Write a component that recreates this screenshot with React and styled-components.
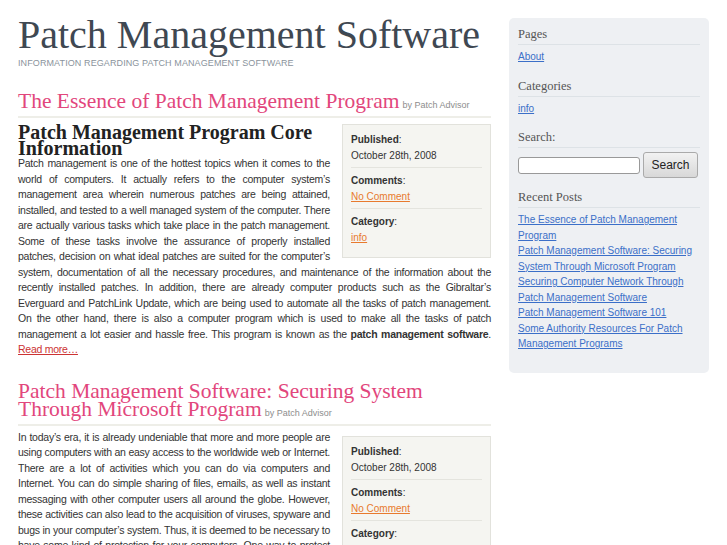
import React from "react";
import styled, { createGlobalStyle } from "styled-components";

const Global = createGlobalStyle`
  body { margin: 0; background: #fff; font-family: "Liberation Sans", Arial, sans-serif; }
`;

const Page = styled.div`
  display: flex;
  gap: 18px;
  padding: 0 18px;
  width: 727px;
  box-sizing: border-box;
  height: 545px;
  overflow: hidden;
`;

const Main = styled.main`
  width: 473px;
  flex-shrink: 0;
`;

const SiteTitle = styled.h1`
  font-family: "Liberation Serif", "Times New Roman", serif;
  font-weight: normal;
  font-size: 40px;
  color: #3f4852;
  margin: 12px 0 0;
  line-height: 46px;
  white-space: nowrap;
`;

const Tagline = styled.div`
  font-size: 9px;
  color: #8a939c;
  text-transform: uppercase;
  letter-spacing: 0.1px;
  margin-top: 0;
`;

const Post = styled.article`
  margin-top: ${(p) => p.$top}px;
`;

const PostHead = styled.div`
  border-bottom: 2px solid #eeeee8;
  padding-bottom: 4px;
  margin-bottom: 4px;
`;

const PostTitle = styled.h2`
  display: inline;
  font-family: "Liberation Serif", "Times New Roman", serif;
  font-weight: normal;
  font-size: 21.5px;
  line-height: 15px;
  color: #e2467c;
  margin: 0;
`;

const By = styled.span`
  font-size: 9px;
  color: #8d8d8d;
  margin-left: 3px;
  white-space: nowrap;
`;

const Meta = styled.aside`
  float: right;
  width: 149px;
  box-sizing: border-box;
  margin: ${(p) => p.$top}px 0 6px 12px;
  background: #f5f5f1;
  border: 1px solid #e2e2dc;
  padding: 5px 8px 8px;
  font-size: 10px;
  color: #333;
`;

const MetaItem = styled.div`
  line-height: 16px;
  padding: 2px 0 3px;
  & + & { border-top: 1px solid #e4e4de; padding-top: 5px; }
  a { color: #e87a2e; }
`;

const SubHead = styled.h3`
  font-family: "Liberation Serif", "Times New Roman", serif;
  font-weight: bold;
  font-size: 20px;
  line-height: 16px;
  margin: 0;
  color: #222;
  padding-top: 2px;
`;

const Body = styled.p`
  font-size: 10.5px;
  letter-spacing: -0.25px;
  line-height: 15.5px;
  color: #333;
  text-align: justify;
  margin: ${(p) => p.$top || 0}px 0 0;
  a { color: #c33; }
`;

const Side = styled.aside`
  width: 200px;
  margin-top: 18px;
  height: 355px;
  background: #eef0f3;
  border-radius: 5px;
  padding: 9px 9px;
  box-sizing: border-box;
`;

const WidgetTitle = styled.h4`
  font-family: "Liberation Serif", "Times New Roman", serif;
  font-weight: normal;
  font-size: 12.5px;
  color: #555;
  margin: ${(p) => p.$top}px 0 4px;
  padding-bottom: 2px;
  border-bottom: 1px solid #dde2e6;
`;

const SideLink = styled.a`
  display: block;
  font-size: 10px;
  line-height: 15.5px;
  color: #3b6fc8;
  text-decoration: underline;
`;

const SearchRow = styled.div`
  display: flex;
  align-items: center;
  gap: 3px;
`;

const Input = styled.input`
  width: 122px;
  height: 17px;
  border: 1px solid #999;
  border-radius: 3px;
  box-sizing: border-box;
`;

const Button = styled.button`
  height: 26px;
  width: 55px;
  font-family: "Liberation Sans", Arial, sans-serif;
  font-size: 12px;
  color: #222;
  border: 1px solid #aaa;
  border-radius: 3px;
  background: linear-gradient(#f2f2f2, #d8d8d8);
`;

const MetaBox = ({ top }) => (
  <Meta $top={top}>
    <MetaItem><b>Published</b>:<br />October 28th, 2008</MetaItem>
    <MetaItem><b>Comments</b>:<br /><a href="#">No Comment</a></MetaItem>
    <MetaItem><b>Category</b>:<br /><a href="#">info</a></MetaItem>
  </Meta>
);

export default function App() {
  return (
    <>
      <Global />
      <Page>
        <Main>
          <SiteTitle>Patch Management Software</SiteTitle>
          <Tagline>Information regarding Patch Management Software</Tagline>
          <Post $top={26}>
            <PostHead>
              <PostTitle>The Essence of Patch Management Program</PostTitle>
              <By>by Patch Advisor</By>
            </PostHead>
            <MetaBox top={2} />
            <SubHead>Patch Management Program Core Information</SubHead>
            <Body>
              Patch management is one of the hottest topics when it comes to the world of computers. It actually refers to the computer system’s management area wherein numerous patches are being attained, installed, and tested to a well managed system of the computer. There are actually various tasks which take place in the patch management. Some of these tasks involve the assurance of properly installed patches, decision on what ideal patches are suited for the computer’s system, documentation of all the necessary procedures, and maintenance of the information about the recently installed patches. In addition, there are already computer products such as the Gibraltar’s Everguard and PatchLink Update, which are being used to automate all the tasks of patch management. On the other hand, there is also a computer program which is used to make all the tasks of patch management a lot easier and hassle free. This program is known as the <b>patch management software</b>. <a href="#">Read more…</a>
            </Body>
          </Post>
          <Post $top={26}>
            <PostHead>
              <PostTitle>Patch Management Software: Securing System Through Microsoft Program</PostTitle>
              <By>by Patch Advisor</By>
            </PostHead>
            <MetaBox top={6} />
            <Body $top={4}>
              In today’s era, it is already undeniable that more and more people are using computers with an easy access to the worldwide web or Internet. There are a lot of activities which you can do via computers and Internet. You can do simple sharing of files, emails, as well as instant messaging with other computer users all around the globe. However, these activities can also lead to the acquisition of viruses, spyware and bugs in your computer’s system. Thus, it is deemed to be necessary to have some kind of protection for your computers. One way to protect your computer from any possible vulnerability is by way of programs.
            </Body>
          </Post>
        </Main>
        <Side>
          <WidgetTitle $top={0}>Pages</WidgetTitle>
          <SideLink href="#">About</SideLink>
          <WidgetTitle $top={14}>Categories</WidgetTitle>
          <SideLink href="#">info</SideLink>
          <WidgetTitle $top={14}>Search:</WidgetTitle>
          <SearchRow>
            <Input />
            <Button>Search</Button>
          </SearchRow>
          <WidgetTitle $top={12}>Recent Posts</WidgetTitle>
          <SideLink href="#">The Essence of Patch Management Program</SideLink>
          <SideLink href="#">Patch Management Software: Securing System Through Microsoft Program</SideLink>
          <SideLink href="#">Securing Computer Network Through Patch Management Software</SideLink>
          <SideLink href="#">Patch Management Software 101</SideLink>
          <SideLink href="#">Some Authority Resources For Patch Management Programs</SideLink>
        </Side>
      </Page>
    </>
  );
}
